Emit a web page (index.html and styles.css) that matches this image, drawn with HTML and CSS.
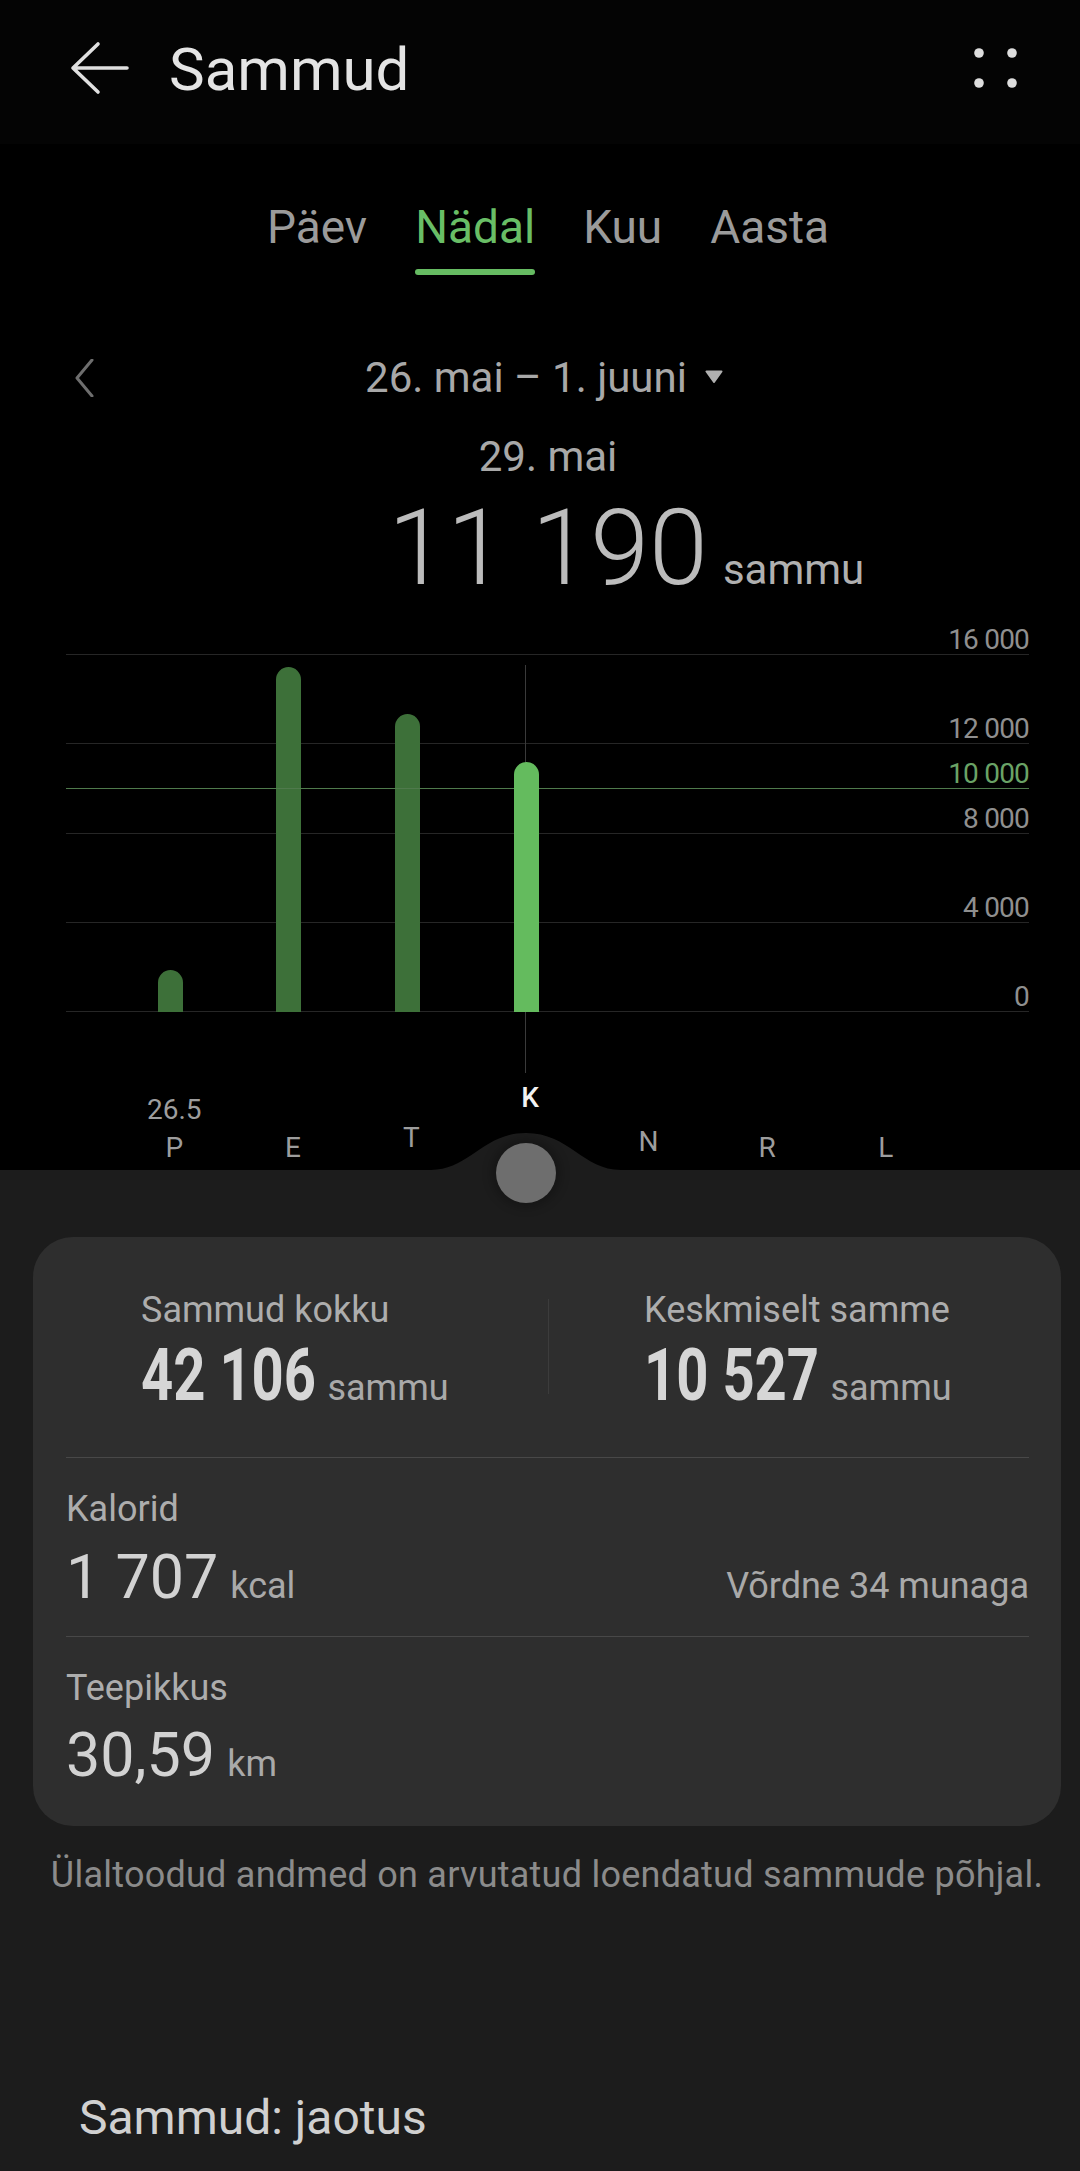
FILE: index.html
```html
<!DOCTYPE html>
<html lang="et">
<head>
<meta charset="utf-8">
<title>Sammud</title>
<link rel="stylesheet" href="styles.css">
</head>
<body>
<div class="app">
  <header class="topbar">
    <svg class="back" viewBox="0 0 60 60" width="60" height="60" aria-hidden="true">
      <path d="M28 4 L3 28 L28 52 M3 28 H57" fill="none" stroke="#e0e0e0" stroke-width="3.6" stroke-linecap="round" stroke-linejoin="round"/>
    </svg>
    <h1 class="title">Sammud</h1>
    <svg class="more" viewBox="0 0 50 50" width="50" height="50" aria-hidden="true">
      <circle cx="9" cy="9" r="4.8" fill="#dedede"/>
      <circle cx="42" cy="9" r="4.8" fill="#dedede"/>
      <circle cx="9" cy="39" r="4.8" fill="#dedede"/>
      <circle cx="42" cy="39" r="4.8" fill="#dedede"/>
    </svg>
  </header>

  <nav class="tabs">
    <div class="tab"><span>Päev</span><i class="tab-bar"></i></div>
    <div class="tab active"><span>Nädal</span><i class="tab-bar"></i></div>
    <div class="tab"><span>Kuu</span><i class="tab-bar"></i></div>
    <div class="tab"><span>Aasta</span><i class="tab-bar"></i></div>
  </nav>

  <div class="range">
    <svg class="prev" viewBox="0 0 20 38" width="20" height="38" aria-hidden="true">
      <path d="M17 1 L2 19 L17 37" fill="none" stroke="#6e6e6e" stroke-width="3" stroke-linecap="round" stroke-linejoin="round"/>
    </svg>
    <div class="range-label">
      <span>26. mai – 1. juuni</span>
      <svg class="caret" viewBox="0 0 18 13" width="18" height="13" aria-hidden="true">
        <path d="M1.5 1.5 H16.5 L9 12 Z" fill="#b0b0b0" stroke="#b0b0b0" stroke-width="2" stroke-linejoin="round"/>
      </svg>
    </div>
    <div></div>
  </div>

  <div class="sel-date">29. mai</div>

  <div class="total">
    <span class="total-num">11 190</span>
    <span class="total-unit">sammu</span>
  </div>

  <section class="chart">
    <div class="plot">
      <div class="gline" style="bottom:100%"></div>
      <div class="gline" style="bottom:75%"></div>
      <div class="gline goal" style="bottom:62.5%"></div>
      <div class="gline" style="bottom:50%"></div>
      <div class="gline" style="bottom:25%"></div>
      <div class="gline" style="bottom:0%"></div>

      <div class="glabel" style="bottom:calc(100% + 1px)">16 000</div>
      <div class="glabel" style="bottom:calc(75% + 1px)">12 000</div>
      <div class="glabel goal" style="bottom:calc(62.5% + 1px)">10 000</div>
      <div class="glabel" style="bottom:calc(50% + 1px)">8 000</div>
      <div class="glabel" style="bottom:calc(25% + 1px)">4 000</div>
      <div class="glabel" style="bottom:calc(0% + 1px)">0</div>

      <div class="bars">
        <div class="slot"><div class="bar" style="height:11.9%"></div></div>
        <div class="slot"><div class="bar" style="height:96.7%"></div></div>
        <div class="slot"><div class="bar" style="height:83.5%"></div></div>
        <div class="slot sel"><div class="bar" style="height:69.9%"></div></div>
        <div class="slot"></div>
        <div class="slot"></div>
        <div class="slot"></div>
      </div>
    </div>

    <div class="days">
      <div class="day"><span class="day-date">26.5</span><span>P</span></div>
      <div class="day"><span>E</span></div>
      <div class="day lift-t"><span>T</span></div>
      <div class="day current lift-k"><span>K</span></div>
      <div class="day lift-n"><span>N</span></div>
      <div class="day"><span>R</span></div>
      <div class="day"><span>L</span></div>
    </div>
  </section>

  <main class="bottom">
    <svg class="bump" viewBox="0 0 190 40" width="190" height="40" aria-hidden="true">
      <path d="M0 38 C 38 38, 52 1, 95 1 C 138 1, 152 38, 190 38 L190 40 L0 40 Z" fill="#1c1c1c"/>
    </svg>
    <div class="knob"></div>

    <div class="card">
      <div class="stats">
        <div class="stat stat-left">
          <div class="label">Sammud kokku</div>
          <div class="stat-value"><span class="cnum">42 106</span><span class="unit">sammu</span></div>
        </div>
        <div class="vdiv"></div>
        <div class="stat stat-right">
          <div class="label">Keskmiselt samme</div>
          <div class="stat-value"><span class="cnum">10 527</span><span class="unit">sammu</span></div>
        </div>
      </div>

      <div class="sep"></div>

      <div class="metric">
        <div class="label">Kalorid</div>
        <div class="metric-row">
          <div class="metric-value"><span class="num">1 707</span><span class="unit">kcal</span></div>
          <div class="note">Võrdne 34 munaga</div>
        </div>
      </div>

      <div class="sep"></div>

      <div class="metric last">
        <div class="label">Teepikkus</div>
        <div class="metric-row">
          <div class="metric-value"><span class="num">30,59</span><span class="unit">km</span></div>
        </div>
      </div>
    </div>

    <p class="footnote">Ülaltoodud andmed on arvutatud loendatud sammude põhjal.</p>

    <h2 class="section-title">Sammud: jaotus</h2>
  </main>
</div>
</body>
</html>
```

FILE: styles.css
```css
* {
  box-sizing: border-box;
}

html, body {
  margin: 0;
  padding: 0;
  background: #000;
}

body {
  font-family: Roboto, "Noto Sans", "Liberation Sans", sans-serif;
  color: #aaa;
  overflow: hidden;
}

.app {
  width: 1080px;
  min-height: 2171px;
  display: flex;
  flex-direction: column;
  background: #000;
}

/* ---------- top bar ---------- */
.topbar {
  height: 144px;
  background: #040404;
  display: flex;
  align-items: flex-start;
  padding: 40px 60px 0 70px;
}

.back {
  display: block;
  flex: none;
}

.title {
  margin: 0 0 0 39px;
  font-size: 60px;
  line-height: 60px;
  font-weight: 400;
  color: #e4e4e4;
}

.more {
  display: block;
  margin-left: auto;
  margin-top: 4px;
}

/* ---------- tabs ---------- */
.tabs {
  margin-top: 60px;
  padding-left: 16px;
  display: flex;
  justify-content: center;
  gap: 48px;
}

.tab {
  display: flex;
  flex-direction: column;
  font-size: 46px;
  line-height: 46px;
  color: #9b9b9b;
}

.tab-bar {
  display: block;
  height: 6px;
  margin-top: 19px;
  border-radius: 3px;
  background: transparent;
}

.tab.active {
  color: #69be66;
}

.tab.active .tab-bar {
  background: #66bb62;
}

/* ---------- range ---------- */
.range {
  margin-top: 82px;
  padding-left: 8px;
  display: grid;
  grid-template-columns: 1fr auto 1fr;
  align-items: center;
}

.prev {
  display: block;
  justify-self: start;
  margin-left: 67px;
}

.range-label {
  display: flex;
  align-items: center;
  font-size: 42px;
  line-height: 42px;
  color: #a8a8a8;
  white-space: nowrap;
}

.caret {
  display: block;
  margin-left: 18px;
  margin-top: -3px;
}

.sel-date {
  margin-top: 37px;
  padding-left: 16px;
  text-align: center;
  font-size: 42px;
  line-height: 42px;
  color: #a8a8a8;
}

.total {
  margin-top: 17px;
  padding-left: 16px;
  display: grid;
  grid-template-columns: 1fr auto 1fr;
  align-items: baseline;
}

.total-num {
  grid-column: 2;
  font-size: 106px;
  line-height: 106px;
  font-weight: 300;
  color: #bcbcbc;
  white-space: nowrap;
}

.total-unit {
  grid-column: 3;
  justify-self: start;
  margin-left: 15px;
  font-size: 42px;
  color: #b0b0b0;
}

/* ---------- chart ---------- */
.chart {
  margin-top: 54px;
  padding-bottom: 8px;
}

.plot {
  position: relative;
  margin-left: 66px;
  width: 963px;
  height: 357px;
}

.gline {
  position: absolute;
  left: 0;
  right: 0;
  height: 1px;
  background: #262626;
}

.gline.goal {
  background: #4f7a4c;
  z-index: 2;
}

.glabel {
  position: absolute;
  right: 0;
  font-size: 28px;
  line-height: 28px;
  letter-spacing: -0.8px;
  color: #8f8f8f;
  white-space: nowrap;
}

.glabel.goal {
  color: #6aa366;
}

.bars {
  position: absolute;
  left: 45px;
  width: 830px;
  top: 0;
  bottom: 0;
  display: flex;
  align-items: flex-end;
}

.slot {
  position: relative;
  flex: 1;
  height: 100%;
  display: flex;
  align-items: flex-end;
  justify-content: center;
}

.bar {
  position: relative;
  z-index: 1;
  width: 25px;
  border-radius: 12.5px 12.5px 0 0;
  background: #3d7039;
}

.slot.sel .bar {
  background: #64bb5e;
  z-index: 3;
}

.slot.sel::before {
  content: "";
  position: absolute;
  left: calc(50% - 1px);
  top: 10px;
  bottom: -61px;
  width: 1px;
  background: #3a3a3a;
}

.days {
  margin-left: 115px;
  width: 830px;
  height: 150px;
  display: flex;
  align-items: flex-end;
}

.day {
  flex: 1;
  display: flex;
  flex-direction: column;
  align-items: center;
  font-size: 28px;
  line-height: 28px;
  color: #9d9d9d;
}

.day-date {
  margin-bottom: 10px;
}

.day.lift-t { margin-bottom: 10px; }
.day.lift-k { margin-bottom: 50px; }
.day.lift-n { margin-bottom: 6px; }

.day.current {
  color: #f2f2f2;
  font-weight: 500;
}

/* ---------- bottom sheet ---------- */
.bottom {
  position: relative;
  flex: 1;
  background: #1c1c1c;
  padding: 67px 19px 0 33px;
}

.bump {
  position: absolute;
  left: 431px;
  top: -38px;
  display: block;
}

.knob {
  position: absolute;
  left: 496px;
  top: -27px;
  width: 60px;
  height: 60px;
  border-radius: 50%;
  background: #6e6e6e;
  box-shadow: 0 0 10px 5px rgba(0, 0, 0, 0.22);
}

.card {
  background: #2e2e2e;
  border-radius: 40px;
  padding: 55px 32px 41px 33px;
}

.label {
  font-size: 36px;
  line-height: 36px;
  color: #adadad;
  white-space: nowrap;
}

.stats {
  display: grid;
  grid-template-columns: 482px 1px 1fr;
}

.stat-left {
  padding-left: 75px;
}

.stat-right {
  padding-left: 95px;
}

.vdiv {
  height: 95px;
  margin-top: 7px;
  background: #3c3c3c;
}

.stat-value {
  margin-top: 12px;
  display: flex;
  align-items: baseline;
}

.cnum {
  display: inline-block;
  font-size: 72px;
  line-height: 72px;
  font-weight: 700;
  color: #d6d6d6;
  white-space: nowrap;
  transform: scaleX(0.78);
  transform-origin: 0 50%;
  margin-right: -38px;
}

.unit {
  font-size: 36px;
  color: #a9a9a9;
}

.sep {
  height: 1px;
  background: #484848;
}

.stats + .sep {
  margin-top: 45px;
}

.metric {
  padding-top: 33px;
  padding-bottom: 29px;
}

.metric.last {
  padding-bottom: 0;
}

.metric-row {
  margin-top: 20px;
  display: flex;
  align-items: baseline;
  justify-content: space-between;
}

.metric.last .metric-row {
  margin-top: 19px;
}

.metric-value {
  display: flex;
  align-items: baseline;
}

.num {
  font-size: 61px;
  line-height: 60px;
  color: #d2d2d2;
  margin-right: 12px;
  white-space: nowrap;
}

.note {
  font-size: 36px;
  color: #a9a9a9;
  white-space: nowrap;
}

.footnote {
  margin: 31px 0 0;
  text-align: center;
  font-size: 36px;
  line-height: 36px;
  letter-spacing: 0.25px;
  color: #8b8b8b;
  white-space: nowrap;
}

.section-title {
  margin: 201px 0 0;
  padding-left: 46px;
  font-size: 48px;
  line-height: 48px;
  font-weight: 400;
  color: #d0d0d0;
}
```
